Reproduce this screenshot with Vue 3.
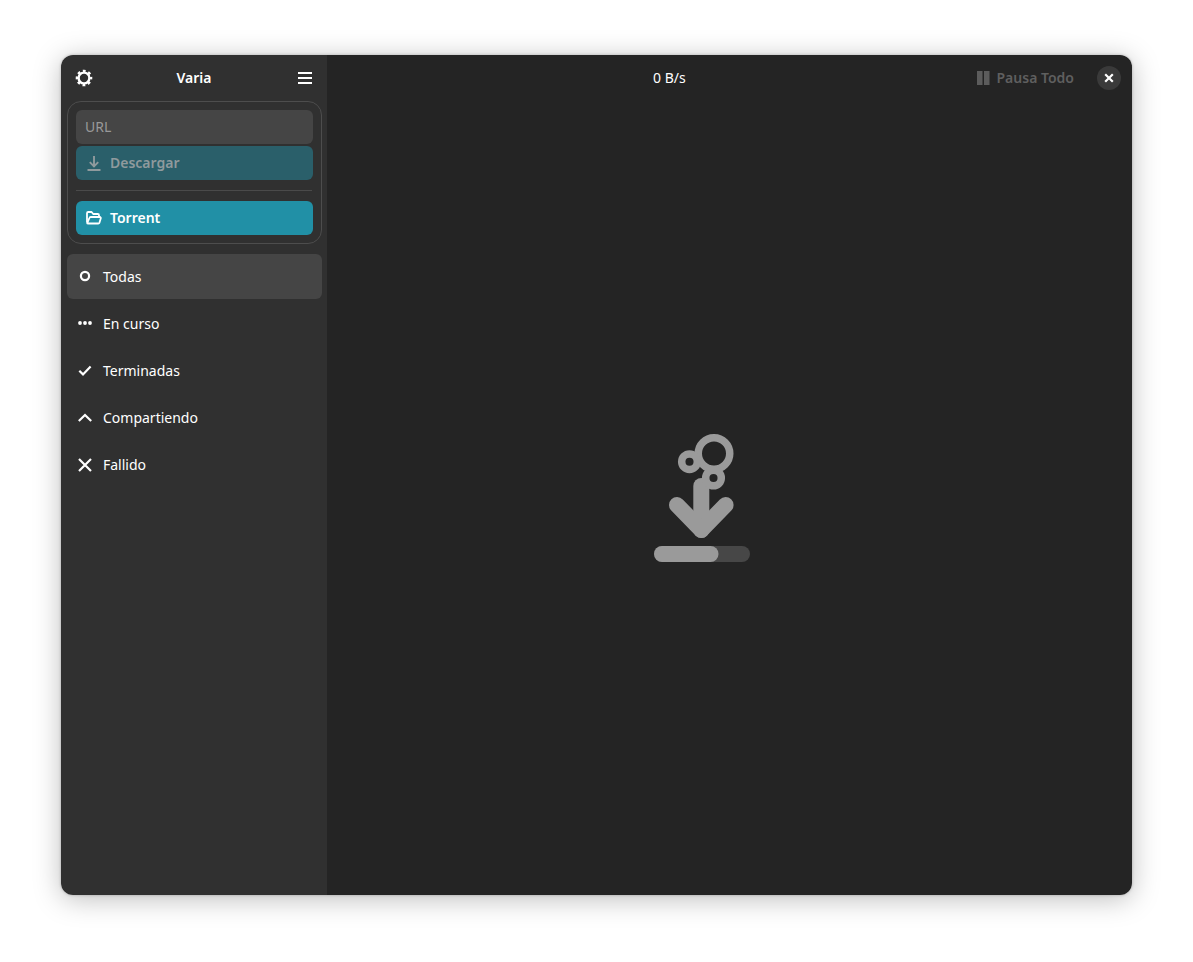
<script setup>
const filters = [
  { label: 'Todas', icon: 'ring', active: true },
  { label: 'En curso', icon: 'dots' },
  { label: 'Terminadas', icon: 'check' },
  { label: 'Compartiendo', icon: 'up' },
  { label: 'Fallido', icon: 'x' },
]
</script>

<template>
  <div class="page">
    <div class="window">
      <aside class="sidebar">
        <header class="side-head">
          <svg class="gear" width="18" height="18" viewBox="0 0 18 18" fill="none" stroke="#fff">
            <circle cx="9" cy="9" r="5.400" stroke-width="2.400" />
            <circle cx="9" cy="9" r="7" stroke-width="2.600" stroke-dasharray="2.750 2.750" stroke-dashoffset="1.375" />
          </svg>
          <span class="app-title">Varia</span>
          <svg width="14" height="12" viewBox="0 0 14 12" class="burger">
            <path fill="#fff" d="M0 0h14v2H0zM0 5h14v2H0zM0 10h14v2H0z" />
          </svg>
        </header>

        <section class="add-box">
          <div class="url"><span class="lift">URL</span></div>
          <button class="btn btn-off">
            <svg width="16" height="16" viewBox="0 0 16 16" fill="none" stroke="#8f9a9d" stroke-width="1.900">
              <path d="M8 1v10M3.800 7.200 8 11.400l4.200-4.200M1.500 15h13" />
            </svg>
            <span class="lift">Descargar</span>
          </button>
          <div class="sep"></div>
          <button class="btn btn-on">
            <svg width="16" height="16" viewBox="0 0 16 16" fill="none" stroke="#fff" stroke-width="1.800" stroke-linejoin="round">
              <path d="M1 12.500V3.200C1 2.500 1.500 2 2.200 2h3.400l1.600 2h4.600c.7 0 1.200.5 1.200 1.200V7" />
              <path d="M1.200 13.200 3.400 8c.2-.6.6-1 1.300-1h9.100c.7 0 1.200.7 1 1.300l-1.300 4.300c-.2.500-.6.900-1.200.9H2.400c-.7 0-1.200-.2-1.200-.3z" />
            </svg>
            <span class="lift">Torrent</span>
          </button>
        </section>

        <nav class="filters">
          <div v-for="f in filters" :key="f.label" class="filter" :class="{ active: f.active }">
            <svg width="14" height="14" viewBox="0 0 14 14" fill="none" stroke="#fff" stroke-width="2.200">
              <circle v-if="f.icon === 'ring'" cx="7" cy="6" r="4.100" />
              <g v-else-if="f.icon === 'dots'" fill="#fff" stroke="none">
                <circle cx="2" cy="6" r="1.900" /><circle cx="7" cy="6" r="1.900" /><circle cx="12" cy="6" r="1.900" />
              </g>
              <path v-else-if="f.icon === 'check'" d="M1.300 6.800 5 10.400 12.600 2.600" />
              <path v-else-if="f.icon === 'up'" d="M.8 10 7 4l6.200 6" />
              <path v-else d="M1 1l12 12M13 1 1 13" />
            </svg>
            <span>{{ f.label }}</span>
          </div>
        </nav>
      </aside>

      <main class="content">
        <header class="main-head">
          <span class="speed lift">0 B/s</span>
          <div class="pause">
            <svg width="13" height="14" viewBox="0 0 13 14"><path fill="#5c5c5c" d="M0 0h5.500v14H0zM7 0h5.500v14H7z" /></svg>
            <span class="lift">Pausa Todo</span>
          </div>
          <button class="close">
            <svg width="10" height="10" viewBox="0 0 10 10"><path d="M1.200 1.200l7.600 7.600M8.800 1.200 1.200 8.800" stroke="#fff" stroke-width="2.200" fill="none" /></svg>
          </button>
        </header>
        <div class="empty">
          <svg width="97" height="130" viewBox="653 433 97 130">
            <g fill="none" stroke="#9a9a9a">
              <path d="M701.300 530V486" stroke-width="16" stroke-linecap="round" />
              <path d="M677 505l24.300 25 24.300-25" stroke-width="16" stroke-linecap="round" stroke-linejoin="round" />
              <circle cx="714" cy="453.500" r="15.750" stroke-width="7.500" />
              <circle cx="689.500" cy="461.700" r="7.800" stroke-width="7.500" />
              <circle cx="713.500" cy="478" r="7.800" stroke-width="7.500" />
            </g>
            <rect x="654" y="546" width="96" height="16" rx="8" fill="#474747" />
            <rect x="654" y="546" width="64.500" height="16" rx="8" fill="#9a9a9a" />
          </svg>
        </div>
      </main>
    </div>
  </div>
</template>

<style>
html, body { margin: 0; background: #fff; }
</style>

<style scoped>
.page {
  width: 1193px;
  height: 962px;
  box-sizing: border-box;
  padding: 55px 61px 67px;
  font-family: "Noto Sans", "Open Sans", sans-serif;
  font-size: 14px;
  color: #fff;
  overflow: hidden;
}
.lift { margin-bottom: 2px; }
.window {
  display: flex;
  height: 840px;
  border-radius: 12px;
  overflow: hidden;
  box-shadow: 0 4px 28px rgba(0, 0, 0, 0.26), 0 0 3px rgba(0, 0, 0, 0.25);
}
.sidebar {
  width: 266px;
  flex: none;
  background: #303030;
  display: flex;
  flex-direction: column;
}
.side-head {
  height: 46px;
  display: flex;
  align-items: center;
  padding: 0 14px;
  box-sizing: border-box;
}
.gear { margin-right: auto; }
.app-title {
  position: absolute;
  left: 61px;
  width: 266px;
  text-align: center;
  font-weight: 600;
  margin-bottom: 2px;
}
.burger { flex: none; margin-right: 1px; }
.add-box {
  margin: 0 5px 0 6px;
  padding: 8px;
  height: 143px;
  box-sizing: border-box;
  border: 1px solid #4d4d4d;
  border-radius: 14px;
  display: flex;
  flex-direction: column;
}
.url {
  height: 34px;
  flex: none;
  background: #454545;
  border-radius: 6px;
  color: #999;
  display: flex;
  align-items: center;
  padding-left: 9px;
}
.btn {
  height: 34px;
  flex: none;
  border: 0;
  border-radius: 6px;
  display: flex;
  align-items: center;
  gap: 8px;
  padding: 0 0 0 10px;
  font: inherit;
  font-weight: 600;
}
.btn-off { background: #2a5f6a; color: #8f9a9d; margin-top: 2px; }
.btn-on { background: #2190a6; color: #fff; }
.sep { height: 1px; background: #4a4a4a; margin: 10px 1px 10px 0; flex: none; }
.filters {
  margin: 10px 5px 0 6px;
  display: flex;
  flex-direction: column;
  gap: 2px;
}
.filter {
  height: 45px;
  border-radius: 6px;
  display: flex;
  align-items: center;
  gap: 11px;
  padding-left: 11px;
}
.filter.active { background: #454545; }
.content {
  flex: 1;
  background: #242424;
  display: flex;
  flex-direction: column;
}
.main-head {
  height: 46px;
  flex: none;
  display: flex;
  align-items: center;
  padding: 0 11px 0 326px;
}
.speed { margin-right: auto; }
.pause {
  display: flex;
  align-items: center;
  gap: 7px;
  color: #5f5f5f;
  font-weight: 600;
  margin-right: 23px;
}
.close {
  width: 24px;
  height: 24px;
  padding: 0;
  border: 0;
  border-radius: 50%;
  background: #3a3a3a;
  display: flex;
  align-items: center;
  justify-content: center;
}
.empty {
  flex: 1;
  position: relative;
}
.empty svg { position: absolute; left: 326px; top: 332px; }
</style>
